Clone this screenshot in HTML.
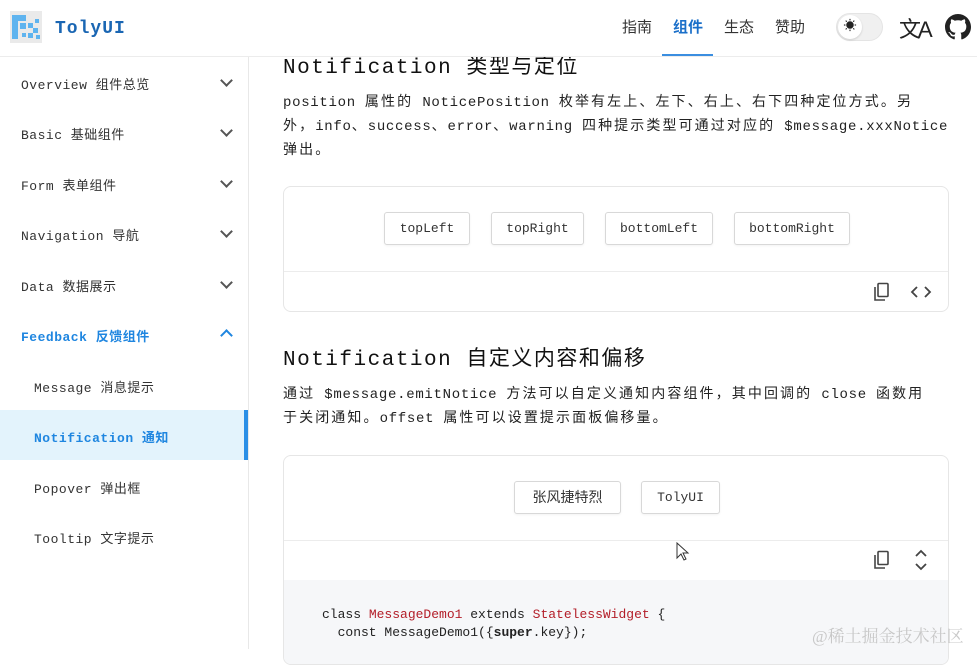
<!DOCTYPE html>
<html><head><meta charset="utf-8"><style>
*{box-sizing:border-box;margin:0;padding:0}
body{width:977px;height:649px;overflow:hidden;background:#fff;font-family:"Liberation Mono","Noto Sans CJK SC",monospace;color:#222;position:relative}
.hdr{position:absolute;left:0;top:0;width:977px;height:57px;background:rgba(255,255,255,0.97);border-bottom:1px solid #ececec;z-index:5}
.logo{position:absolute;left:10px;top:11px;width:32px;height:32px;background:#eee}
.brand{position:absolute;left:55px;top:19px;font-size:18px;font-weight:bold;color:#1a66b3;letter-spacing:1px;font-family:"Liberation Mono",monospace}
.nav{position:absolute;top:16px;font-size:15px;font-family:"Liberation Sans","Noto Sans CJK SC",sans-serif;color:#333}
.side{position:absolute;left:0;top:57px;width:249px;height:592px;border-right:1px solid #e8e8e8}
.si{position:absolute;left:21px;font-size:13px;letter-spacing:0.5px;color:#333}
.sub{left:34px}
.chev{position:absolute;left:222px;width:9px;height:9px;border-right:2px solid #555;border-bottom:2px solid #555;transform:rotate(45deg)}
h2{position:absolute;font-size:21px;font-weight:normal;letter-spacing:1.5px;color:#111;white-space:nowrap}
p{position:absolute;font-size:14px;line-height:24px;letter-spacing:2.1px;color:#222;white-space:nowrap}
.l{letter-spacing:0.7px}
.box{position:absolute;left:283px;width:666px;border:1px solid #e6e6e6;border-radius:8px;background:#fff}
.btn{position:absolute;height:33px;border:1px solid #d8d8d8;border-radius:3px;font-size:13px;line-height:31px;text-align:center;color:#333;background:#fff;box-shadow:0 1px 2px rgba(0,0,0,.05)}
.div{position:absolute;left:0;right:0;height:1px;background:#ececec}
</style></head><body>
<div class="hdr">
  <svg class="logo" viewBox="0 0 32 32" style="background:#eaeaea"><rect x="2" y="4" width="6" height="24" fill="#5fb4ef"/><rect x="8" y="4" width="8" height="6" fill="#5fb4ef"/><rect x="10" y="12" width="6" height="6" fill="#5fb4ef"/><rect x="18" y="12" width="5" height="5" fill="#5fb4ef"/><rect x="23" y="17" width="5" height="5" fill="#5fb4ef"/><rect x="18" y="22" width="5" height="5" fill="#5fb4ef"/><rect x="25" y="8" width="4" height="4" fill="#5fb4ef"/><rect x="26" y="24" width="4" height="4" fill="#5fb4ef"/><rect x="12" y="22" width="4" height="4" fill="#5fb4ef"/></svg>
  <div class="brand">TolyUI</div>
  <div class="nav" style="left:622px">指南</div>
  <div class="nav" style="left:673px;color:#1a6fc9;font-weight:bold">组件</div>
  <div style="position:absolute;left:662px;top:54px;width:51px;height:2px;background:#3b8ee0"></div>
  <div class="nav" style="left:724px">生态</div>
  <div class="nav" style="left:775px">赞助</div>
  <div style="position:absolute;left:836px;top:13px;width:47px;height:28px;border-radius:14px;background:#f0f0f0;border:1px solid #e4e4e4"></div>
  <div style="position:absolute;left:838px;top:15px;width:24px;height:24px;border-radius:12px;background:#fff;box-shadow:0 1px 2px rgba(0,0,0,.15);font-size:13px;line-height:24px;text-align:center">☀</div>
  <div style="position:absolute;left:899px;top:12px;font-size:22px;font-family:'Liberation Sans','Noto Sans CJK SC',sans-serif;color:#222;letter-spacing:-3px">文A</div>
  <svg style="position:absolute;left:945px;top:14px" width="26" height="26" viewBox="0 0 16 16"><path fill="#222" d="M8 0C3.58 0 0 3.58 0 8c0 3.54 2.29 6.530 5.47 7.59.4.07.55-.17.55-.38 0-.19-.01-.82-.01-1.49-2.01.37-2.53-.49-2.690-.94-.09-.23-.48-.94-.82-1.13-.28-.15-.68-.52-.01-.53.63-.01 1.08.58 1.23.82.72 1.21 1.87.87 2.33.66.07-.52.28-.87.51-1.07-1.78-.2-3.640-.89-3.640-3.95 0-.87.31-1.59.82-2.15-.08-.2-.36-1.02.08-2.12 0 0 .67-.21 2.2.82.64-.18 1.32-.27 2-.27.68 0 1.36.09 2 .27 1.53-1.04 2.2-.82 2.2-.82.44 1.1.16 1.92.08 2.12.51.56.82 1.27.82 2.15 0 3.07-1.87 3.75-3.65 3.95.29.25.54.73.54 1.48 0 1.07-.01 1.93-.01 2.2 0 .21.15.46.55.38A8.013 8.013 0 0016 8c0-4.42-3.58-8-8-8z"/></svg>
</div>

<div class="side">
  <div style="position:absolute;left:0;top:353px;width:248px;height:50px;background:#e3f3fc"></div>
  <div style="position:absolute;left:244px;top:353px;width:4px;height:50px;background:#2b8fe6"></div>
</div>
<div class="si" style="top:74px">Overview 组件总览</div><div class="chev" style="top:76px"></div>
<div class="si" style="top:124px">Basic 基础组件</div><div class="chev" style="top:126px"></div>
<div class="si" style="top:175px">Form 表单组件</div><div class="chev" style="top:177px"></div>
<div class="si" style="top:225px">Navigation 导航</div><div class="chev" style="top:227px"></div>
<div class="si" style="top:276px">Data 数据展示</div><div class="chev" style="top:278px"></div>
<div class="si" style="top:326px;color:#1f86e0;font-weight:bold">Feedback 反馈组件</div><div class="chev" style="top:331px;border-color:#1f86e0;transform:rotate(225deg)"></div>
<div class="si sub" style="top:377px">Message 消息提示</div>
<div class="si sub" style="top:427px;color:#1f86e0;font-weight:bold">Notification  通知</div>
<div class="si sub" style="top:478px">Popover 弹出框</div>
<div class="si sub" style="top:528px">Tooltip 文字提示</div>

<h2 style="left:283px;top:50px">Notification 类型与定位</h2>
<p style="left:283px;top:91px"><span class="l">position </span>属性的<span class="l"> NoticePosition </span>枚举有左上、左下、右上、右下四种定位方式。另<br>外，<span class="l">info</span>、<span class="l">success</span>、<span class="l">error</span>、<span class="l">warning </span>四种提示类型可通过对应的<span class="l"> $message.xxxNotice</span><br>弹出。</p>

<div class="box" style="top:186px;height:126px">
  <div class="btn" style="left:100px;top:25px;width:86px">topLeft</div>
  <div class="btn" style="left:207px;top:25px;width:93px">topRight</div>
  <div class="btn" style="left:321px;top:25px;width:108px">bottomLeft</div>
  <div class="btn" style="left:450px;top:25px;width:116px">bottomRight</div>
  <div class="div" style="top:84px"></div>
  <svg style="position:absolute;left:589px;top:95px" width="18" height="20" viewBox="0 0 18 20"><rect x="5" y="1.5" width="10" height="13" rx="1" fill="none" stroke="#444" stroke-width="1.6"/><path d="M2 5v13h10" fill="none" stroke="#444" stroke-width="1.6"/></svg>
  <svg style="position:absolute;left:626px;top:97px" width="22" height="16" viewBox="0 0 22 16"><path d="M7 3L2 8l5 5M15 3l5 5-5 5" fill="none" stroke="#444" stroke-width="1.8"/></svg>
</div>

<h2 style="left:283px;top:342px">Notification 自定义内容和偏移</h2>
<p style="left:283px;top:383px">通过<span class="l"> $message.emitNotice </span>方法可以自定义通知内容组件，其中回调的<span class="l"> close </span>函数用<br>于关闭通知。<span class="l">offset </span>属性可以设置提示面板偏移量。</p>

<div class="box" style="top:455px;height:210px;overflow:hidden">
  <div class="btn" style="left:230px;top:25px;width:107px;font-family:'Liberation Sans','Noto Sans CJK SC',sans-serif;font-size:14px">张风捷特烈</div>
  <div class="btn" style="left:357px;top:25px;width:79px">TolyUI</div>
  <div class="div" style="top:84px"></div>
  <svg style="position:absolute;left:589px;top:94px" width="18" height="20" viewBox="0 0 18 20"><rect x="5" y="1.5" width="10" height="13" rx="1" fill="none" stroke="#444" stroke-width="1.6"/><path d="M2 5v13h10" fill="none" stroke="#444" stroke-width="1.6"/></svg>
  <svg style="position:absolute;left:629px;top:93px" width="16" height="22" viewBox="0 0 16 22"><path d="M3 7l5-5 5 5M3 15l5 5 5-5" fill="none" stroke="#444" stroke-width="1.8"/></svg>
  <div style="position:absolute;left:0;top:124px;right:0;height:90px;background:#f6f7f9"></div>
  <div style="position:absolute;left:38px;top:150px;font-size:13px;line-height:18px;color:#222;white-space:pre;font-family:'Liberation Mono',monospace">class <span style="color:#b31d28">MessageDemo1</span> extends <span style="color:#b31d28">StatelessWidget</span> {
  const MessageDemo1({<b>super</b>.key});</div>
</div>
<svg style="position:absolute;left:676px;top:542px" width="14" height="20" viewBox="0 0 14 20"><path d="M1 1v15l4-4 3 6 2-1-3-6h5z" fill="#fff" stroke="#333" stroke-width="1"/></svg>
<div style="position:absolute;left:812px;top:622px;font-size:17px;color:#c8c8c8;font-family:'Liberation Serif','Noto Serif CJK SC',serif">@稀土掘金技术社区</div>
</body></html>
